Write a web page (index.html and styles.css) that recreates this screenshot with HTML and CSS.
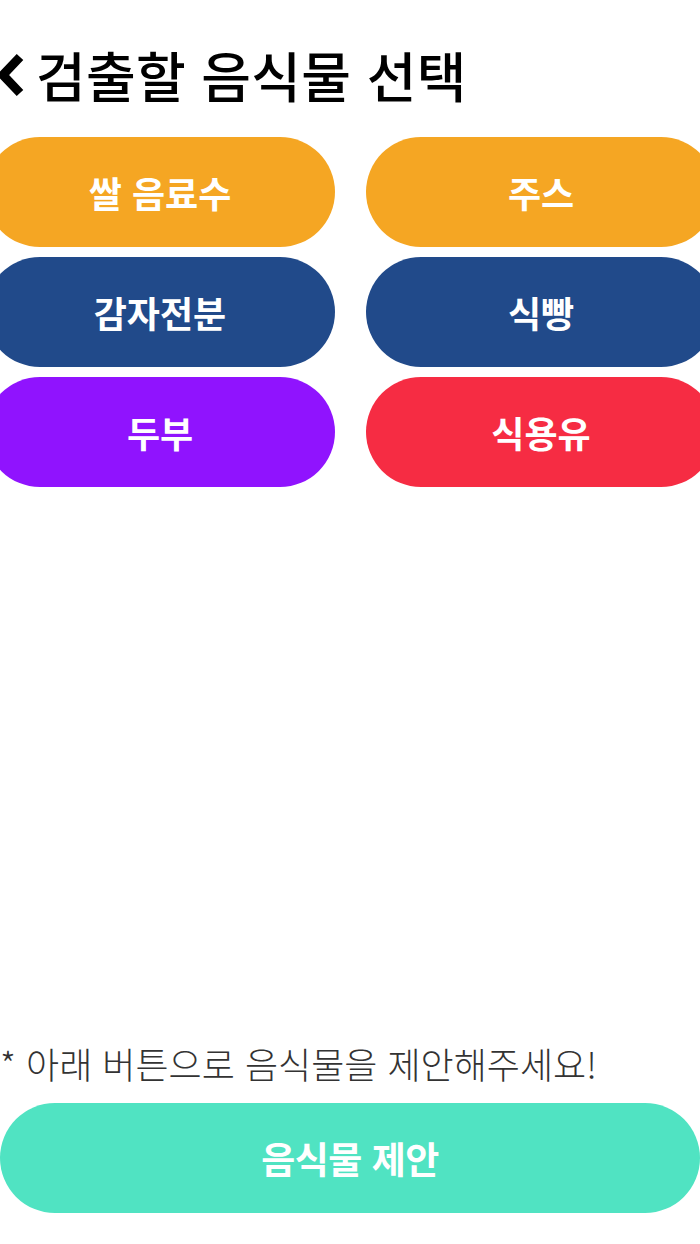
FILE: index.html
```html
<!DOCTYPE html>
<html lang="ko">
<head>
    <meta charset="UTF-8">
    <title>검출할 음식물 선택</title>
    <link rel="stylesheet" href="styles.css">
</head>
<body>
    <div class="page">
        <header class="topbar">
            <svg class="back" width="28" height="46" viewBox="0 0 28 46">
                <polyline points="24,5 7,23 24,41" fill="none" stroke="#000" stroke-width="9" stroke-linejoin="miter"/>
            </svg>
            <h1>검출할 음식물 선택</h1>
        </header>

        <div class="food-grid">
            <button class="food orange">쌀 음료수</button>
            <button class="food orange">주스</button>
            <button class="food navy">감자전분</button>
            <button class="food navy">식빵</button>
            <button class="food purple">두부</button>
            <button class="food red">식용유</button>
        </div>

        <div class="footer">
            <p class="hint">* 아래 버튼으로 음식물을 제안해주세요!</p>
            <button class="suggest">음식물 제안</button>
        </div>
    </div>
</body>
</html>
```

FILE: styles.css
```css
body { margin: 0; font-family: "Noto Sans CJK KR", "Noto Sans", sans-serif; background: #fff; overflow: hidden; }
.page { display: flex; flex-direction: column; height: 1244px; }

.topbar { display: flex; align-items: center; height: 54px; margin-top: 48px; }
.back { margin-left: -4px; margin-right: 12px; flex: none; }
.topbar h1 { margin: 0; font-size: 54px; font-weight: 500; letter-spacing: 0.3px; color: #000; line-height: 1; }

.food-grid {
    display: grid;
    grid-template-columns: 350px 350px;
    grid-auto-rows: 110px;
    column-gap: 31px;
    row-gap: 10px;
    margin-top: 35px;
    margin-left: -15px;
}
.food {
    border: none;
    border-radius: 55px;
    color: #fff;
    font-family: inherit;
    font-size: 36px;
    font-weight: 700;
    padding: 0;
}
.orange { background-color: #F5A623; }
.navy { background-color: #214A8A; }
.purple { background-color: #9013FE; }
.red { background-color: #F62C43; }

.footer { margin-top: auto; padding-bottom: 31px; }
.hint { margin: 0 0 18px; font-size: 36px; font-weight: 200; color: #333; line-height: 1.2; }
.suggest {
    display: block;
    width: 700px;
    height: 110px;
    border: none;
    border-radius: 55px;
    background-color: #50E3C2;
    color: #fff;
    font-family: inherit;
    font-size: 37px;
    font-weight: 700;
    letter-spacing: -0.5px;
}
```
